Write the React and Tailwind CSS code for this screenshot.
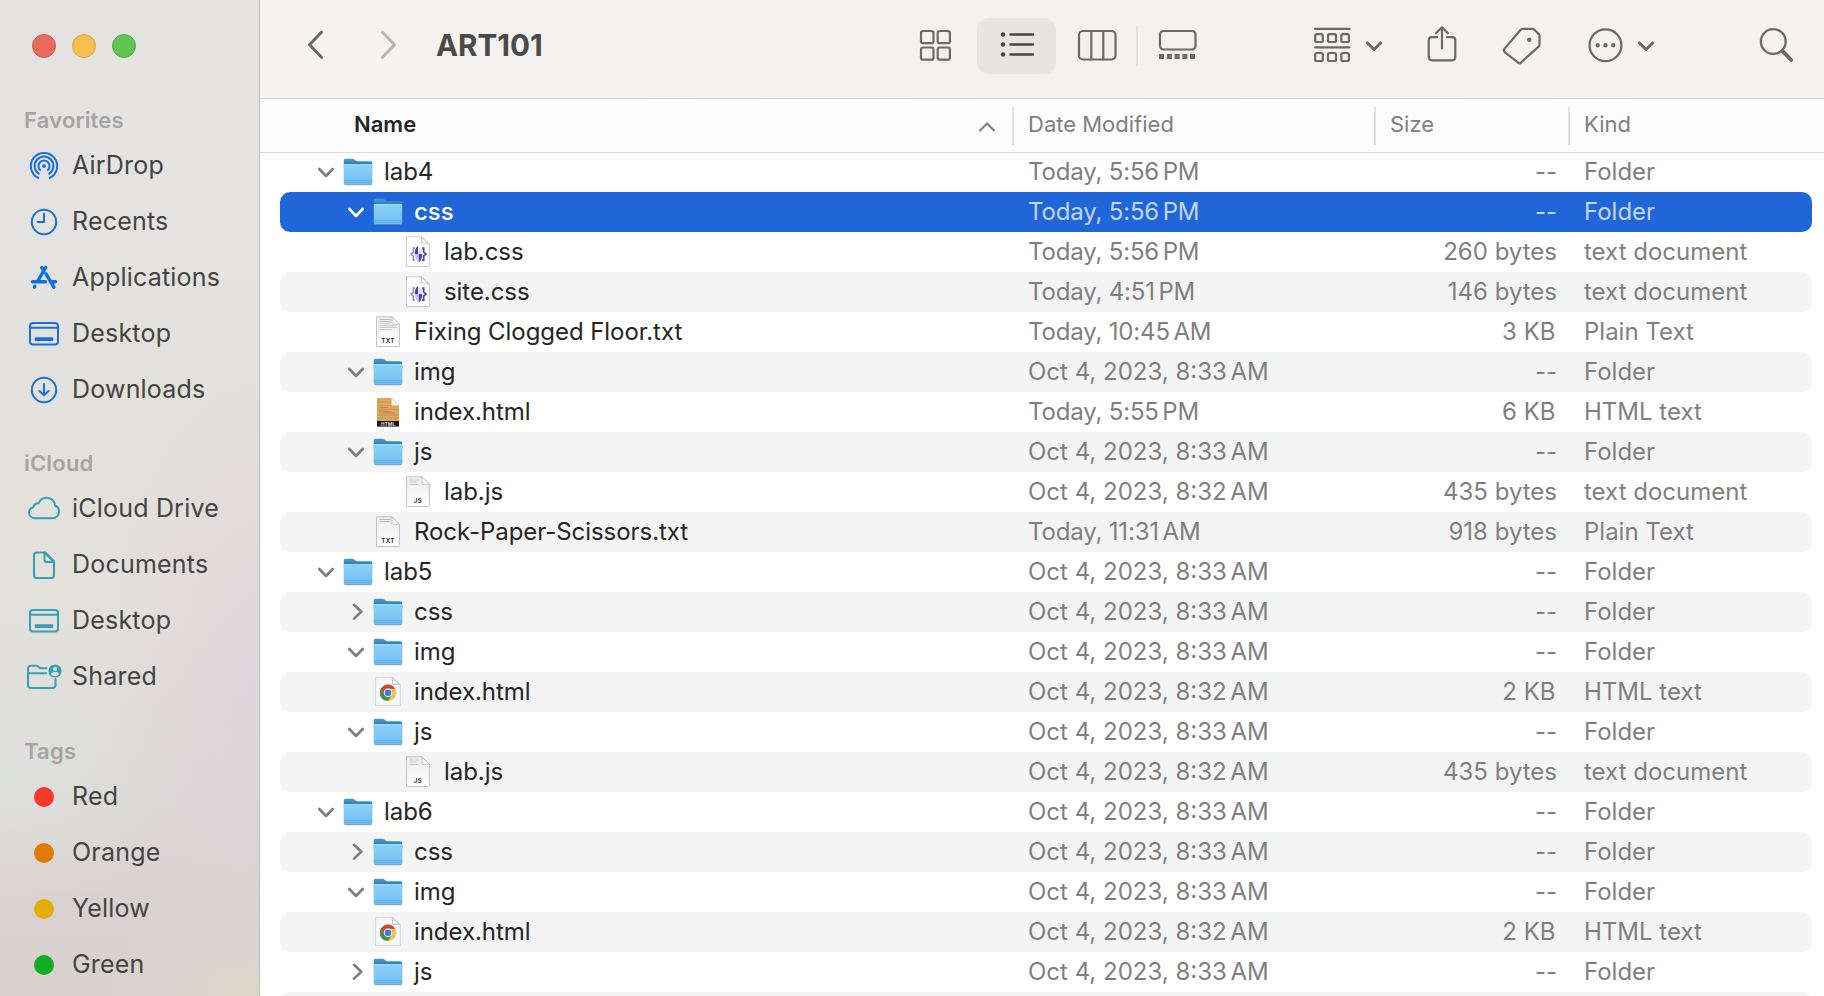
const DATE = "Oct 4, 2023, 8:33 AM";
const DATE2 = "Oct 4, 2023, 8:32 AM";

const rows = [
  { level: 0, open: true, icon: "folder", name: "lab4", date: "Today, 5:56 PM", size: "--", kind: "Folder" },
  { level: 1, open: true, icon: "folder", name: "css", date: "Today, 5:56 PM", size: "--", kind: "Folder", selected: true },
  { level: 2, icon: "css", name: "lab.css", date: "Today, 5:56 PM", size: "260 bytes", kind: "text document" },
  { level: 2, icon: "css", name: "site.css", date: "Today, 4:51 PM", size: "146 bytes", kind: "text document" },
  { level: 1, icon: "txt", name: "Fixing Clogged Floor.txt", date: "Today, 10:45 AM", size: "3 KB", kind: "Plain Text" },
  { level: 1, open: true, icon: "folder", name: "img", date: DATE, size: "--", kind: "Folder" },
  { level: 1, icon: "wood", name: "index.html", date: "Today, 5:55 PM", size: "6 KB", kind: "HTML text" },
  { level: 1, open: true, icon: "folder", name: "js", date: DATE, size: "--", kind: "Folder" },
  { level: 2, icon: "js", name: "lab.js", date: DATE2, size: "435 bytes", kind: "text document" },
  { level: 1, icon: "txt2", name: "Rock-Paper-Scissors.txt", date: "Today, 11:31 AM", size: "918 bytes", kind: "Plain Text" },
  { level: 0, open: true, icon: "folder", name: "lab5", date: DATE, size: "--", kind: "Folder" },
  { level: 1, open: false, icon: "folder", name: "css", date: DATE, size: "--", kind: "Folder" },
  { level: 1, open: true, icon: "folder", name: "img", date: DATE, size: "--", kind: "Folder" },
  { level: 1, icon: "chrome", name: "index.html", date: DATE2, size: "2 KB", kind: "HTML text" },
  { level: 1, open: true, icon: "folder", name: "js", date: DATE, size: "--", kind: "Folder" },
  { level: 2, icon: "js", name: "lab.js", date: DATE2, size: "435 bytes", kind: "text document" },
  { level: 0, open: true, icon: "folder", name: "lab6", date: DATE, size: "--", kind: "Folder" },
  { level: 1, open: false, icon: "folder", name: "css", date: DATE, size: "--", kind: "Folder" },
  { level: 1, open: true, icon: "folder", name: "img", date: DATE, size: "--", kind: "Folder" },
  { level: 1, icon: "chrome", name: "index.html", date: DATE2, size: "2 KB", kind: "HTML text" },
  { level: 1, open: false, icon: "folder", name: "js", date: DATE, size: "--", kind: "Folder" },
];

function Folder() {
  return (
    <svg width="30" height="30" viewBox="0 0 30 30">
      <defs>
        <linearGradient id="fb" x1="0" y1="0" x2="0" y2="1">
          <stop offset="0" stopColor="#4a9bd3" />
          <stop offset="0.5" stopColor="#2f7fbd" />
        </linearGradient>
        <linearGradient id="ff" x1="0" y1="0" x2="0" y2="1">
          <stop offset="0" stopColor="#8bd0f8" />
          <stop offset="1" stopColor="#74c1f1" />
        </linearGradient>
      </defs>
      <rect x="0.8" y="8" width="28.6" height="20.6" rx="2" fill="#000" opacity="0.14" />
      <path d="M.8 3.700C.8 2.300 1.400 1.700 2.800 1.700h6.400c1 0 1.500.2 2.300.9l1 .9c.6.6 1.200.7 2 .7h12.700c1.400 0 2 .7 2 2V12H.8z" fill="url(#fb)" />
      <path d="M.8 8.500c0-1 .6-1.500 1.600-1.500h25.200c1 0 1.600.5 1.600 1.500v17c0 1.300-.7 2-2 2H2.800c-1.300 0-2-.7-2-2z" fill="url(#ff)" />
      <path d="M1.200 7.600h27.600" stroke="#a5ddfb" strokeWidth="0.9" />
      <path d="M.8 23.600h28.400M.8 25.400h28.400" stroke="#58a8dc" strokeWidth="0.7" />
      <path d="M1.500 27.400h27" stroke="#4a96c9" strokeWidth="0.7" />
    </svg>
  );
}

function Page({ children, gray, flipped }) {
  return (
    <svg width="26" height="32" viewBox="0 0 26 32">
      <defs>
        <linearGradient id="pg" x1="0" y1="0" x2="0" y2="1">
          <stop offset="0" stopColor="#ececec" />
          <stop offset="1" stopColor="#ffffff" />
        </linearGradient>
      </defs>
      <path d="M1.500 1h15.500L24.500 8.500V31H1.500z" fill="#000" opacity="0.16" />
      <path
        d="M1.500.8h15.500L24.400 8.300V29.600c0 .6-.3.900-.9.900H2.400c-.6 0-.9-.3-.9-.9z"
        fill={gray ? "url(#pg)" : "#fff"}
        stroke={gray ? "#bdbdbd" : "#c6c6c6"}
        strokeWidth="0.9"
      />
      {children}
      <path
        d={flipped ? "M17 1v6.500c0 .6.200.8.800.8h6.600z" : "M16 1c.8 2 .6 4.200.2 6.200 2.800-.5 5.400-.2 8.100 1.100z"}
        fill="#fff"
        stroke="#b9b9b9"
        strokeWidth="0.8"
      />
    </svg>
  );
}

function Ext({ children }) {
  return (
    <text x="13" y="27.3" textAnchor="middle" fontSize="6.2" fontWeight="700" letterSpacing="0.3" fill="#3c3c3c" fontFamily="Inter, sans-serif">
      {children}
    </text>
  );
}

function FileIcon({ type }) {
  if (type === "folder") return <Folder />;
  if (type === "css")
    return (
      <Page>
        <path d="M10 12H8.300v4.200L6 18.100l2.300 1.900v4.200H10" fill="none" stroke="#8f8bd0" strokeWidth="1.5" />
        <path d="M17 12h1.700v4.200l2.300 1.900-2.300 1.900v4.200H17" fill="none" stroke="#4c48a5" strokeWidth="1.7" />
        <path d="M13 10v8H9.800c-.2-3.500.8-6.500 3.200-8z" fill="#4640a4" />
        <path d="M13.600 26.500V18.100h3.600c.1 3.800-1 6.900-3.600 8.400z" fill="#4a45a8" />
        <path d="M13.600 11.500v6.600h3.400c0-2.900-1-5.300-3.400-6.600z" fill="#dddbf5" />
        <path d="M13 25v-7H9.800c.2 3 1.100 5.500 3.200 7z" fill="#c3c0ea" />
      </Page>
    );
  if (type === "txt" || type === "txt2")
    return (
      <Page gray flipped>
        <path d="M4.500 3.500h11M4.500 5.500h11" stroke="#b4b4b4" strokeWidth="0.9" />
        {type === "txt" && <path d="M4.500 7.500h11M4.500 9.500h15M4.500 11.500h17M4.500 13.500h13" stroke="#c3c3c3" strokeWidth="0.9" />}
        <Ext>TXT</Ext>
      </Page>
    );
  if (type === "js")
    return (
      <Page gray flipped>
        <path d="M4.500 4h4M10 4h4M4.500 6h7M4.500 8.500h9" stroke="#c0c0c0" strokeWidth="0.9" />
        <Ext>JS</Ext>
      </Page>
    );
  if (type === "wood")
    return (
      <svg width="26" height="32" viewBox="0 0 26 32">
        <path d="M2 2h14.500L24 9.500V30.500H2z" fill="#dba75e" />
        <path d="M2 6h14M2 9.500h22M2 13.500h22M2 19h22M2 22h22" stroke="#c99650" strokeWidth="0.9" />
        <path d="M4 15.500h12M8 17h12M5 11.500h8" stroke="#b08243" strokeWidth="0.7" />
        <path d="M2 25h22v5.500H2z" fill="#17130f" />
        <text x="13" y="29.5" textAnchor="middle" fontSize="5" fontWeight="700" fill="#ddd" fontFamily="Inter, sans-serif">
          HTML
        </text>
        <path d="M16.500 2v6.500c0 .7.300 1 1 1H24z" fill="#fdf6ea" stroke="#d8c9ae" strokeWidth="0.5" />
      </svg>
    );
  return (
    <svg width="26" height="32" viewBox="0 0 26 32">
      <path d="M.7 1.500h17L25.300 9V29.500H.7z" fill="#f8f8f8" stroke="#d2d2d2" strokeWidth="0.9" />
      <path d="M17 1.700c.9 2.500.7 5 .3 7.200 2.700-.6 5.400-.6 8 .1z" fill="#fff" stroke="#b9b9b9" strokeWidth="0.8" />
      <circle cx="13" cy="16.800" r="8.200" fill="#f0c04a" />
      <path d="M5.900 12.700a8.200 8.200 0 0 1 14.200 0H13l-3.600 6.200z" fill="#cb4638" />
      <path d="M5.900 12.700l3.600 6.200 3.500 6.100A8.200 8.200 0 0 1 5.900 12.700z" fill="#3e9150" />
      <path d="M9.400 18.900l7.100 0L13 25z" fill="#3e9150" />
      <circle cx="13" cy="16.800" r="4.200" fill="#fff" />
      <circle cx="13" cy="16.800" r="3.300" fill="#3b78e0" />
    </svg>
  );
}

function Disclosure({ open, selected }) {
  const color = selected ? "#ffffff" : "#7d7d7d";
  return (
    <svg width="18" height="18" viewBox="0 0 18 18" fill="none" stroke={color} strokeWidth="2.6" strokeLinecap="round" strokeLinejoin="round">
      {open ? <path d="M2.300 6l6.700 7 6.700-7" /> : <path d="M7 1.800l7.300 6.900L7 15.600" />}
    </svg>
  );
}

function DateText({ value }) {
  const at = value.lastIndexOf(" ");
  const tracking = value.startsWith("Today") ? "tracking-[-0.17px]" : "";
  return (
    <span className={tracking}>
      {value.slice(0, at)}
      <span className="-ml-[3px]">{value.slice(at)}</span>
    </span>
  );
}

const indent = ["pl-[37px]", "pl-[67px]", "pl-[97px]"];

function Row({ row, index }) {
  const bg = row.selected ? "bg-[#2166d9]" : index % 2 ? "bg-[#f4f4f4]" : "";
  const dim = row.selected ? "text-[#c1d6f8]" : "text-[#7f7f7f]";
  return (
    <div className={`flex h-10 shrink-0 items-center rounded-[10px] whitespace-nowrap ${bg} ${dim}`}>
      <div className={`flex w-[748px] shrink-0 items-center ${indent[row.level]}`}>
        <span className="w-[18px]">{row.open !== undefined && <Disclosure open={row.open} selected={row.selected} />}</span>
        <span className="ml-2 flex w-[30px] justify-center">
          <FileIcon type={row.icon} />
        </span>
        <span className={`ml-[11px] tracking-[-0.06px] ${row.selected ? "font-medium text-white" : "text-[#252525]"}`}>{row.name}</span>
      </div>
      <div className="w-[347px]">
        <DateText value={row.date} />
      </div>
      <div className={`w-[182px] text-right ${row.size.endsWith("KB") ? "pr-[1.5px]" : ""}`}>{row.size}</div>
      <div className="ml-[27px]">{row.kind}</div>
    </div>
  );
}

function SideIcon({ name }) {
  const p = { width: 36, height: 36, viewBox: "0 0 36 36", fill: "none", strokeWidth: 2, strokeLinecap: "round", strokeLinejoin: "round" };
  const blue = "#1a6fdc";
  const teal = "#3a9fb2";
  if (name === "AirDrop")
    return (
      <svg {...p} stroke={blue}>
        <path d="M12.300 30a13.200 13.200 0 1 1 11.400 0" />
        <path d="M12.800 25.800a9.400 9.400 0 1 1 10.400 0" />
        <path d="M14.200 22.100a5.500 5.500 0 1 1 7.600 0" />
        <circle cx="18" cy="18" r="1.9" fill={blue} stroke="none" />
      </svg>
    );
  if (name === "Recents")
    return (
      <svg {...p} stroke={blue}>
        <circle cx="18" cy="18" r="12.2" />
        <path d="M18 9.700V18h-6.500" />
      </svg>
    );
  if (name === "Applications")
    return (
      <svg {...p} stroke="#0f70e6" strokeWidth="3.4">
        <path d="M19.700 7.500L11.500 21.500M15.800 7.500l1.400 2.300M6.500 21.700h13M26 21.700h3.500M20 13.800L28 27.300M9 26.200l-.6 1" />
      </svg>
    );
  if (name === "DesktopBlue" || name === "Desktop") {
    const c = name === "Desktop" ? teal : blue;
    return (
      <svg {...p} stroke={c}>
        <rect x="4" y="7" width="28" height="21.5" rx="3" />
        <path d="M4 11.800h28" />
        <rect x="8.700" y="21.200" width="18.6" height="3.8" rx="0.8" fill={c} stroke="none" />
      </svg>
    );
  }
  if (name === "Downloads")
    return (
      <svg {...p} stroke={blue}>
        <circle cx="18" cy="18" r="12.2" />
        <path d="M18 12v11M13.500 19l4.500 4.300 4.500-4.300" />
      </svg>
    );
  if (name === "iCloud Drive")
    return (
      <svg {...p} stroke={teal}>
        <path d="M9.300 27.300c-3.500 0-6.300-2.300-6.300-5.700 0-2.700 1.800-4.800 4.400-5.400.4-2.600 2.600-4.300 5.300-3.800C14 9 17 6.700 20.600 6.700c4.700 0 8.200 3.400 8.600 8 2.400.9 3.800 3 3.800 5.800 0 3.800-2.900 6.800-6.700 6.800z" />
      </svg>
    );
  if (name === "Documents")
    return (
      <svg {...p} stroke={teal}>
        <path d="M18.500 5.500H11C9 5.500 8 6.500 8 8.500V28c0 2 1 3 3 3h14c2 0 3-1 3-3V15z" />
        <path d="M18.500 5.500v7.300c0 1.600.7 2.300 2.300 2.300H28" />
        <path d="M18.500 5.500h.8L28 14.300v.7" />
      </svg>
    );
  return (
    <svg {...p} stroke={teal}>
      <path d="M20.500 9.200h-6.300L12 7.200c-.4-.4-.8-.5-1.400-.5H5c-2 0-3 .9-3 2.800v16.700c0 1.900 1 2.800 3 2.800h21.500c2 0 3-.9 3-2.800v-6.300M2 14.200h18" />
      <circle cx="29" cy="12" r="6.600" fill={teal} stroke="none" />
      <circle cx="29" cy="10" r="2.1" fill="#e2e0db" stroke="none" />
      <path d="M25 15.300c.6-1.700 2.200-2.500 4-2.500s3.400.8 4 2.500a5 5 0 0 1-8 0z" fill="#e2e0db" stroke="none" />
    </svg>
  );
}

const sections = [
  { title: "Favorites", items: [["AirDrop"], ["Recents"], ["Applications"], ["Desktop", "DesktopBlue"], ["Downloads"]] },
  { title: "iCloud", items: [["iCloud Drive"], ["Documents"], ["Desktop"], ["Shared"]] },
];
const tags = [
  ["Red", "bg-[#f8372b]"],
  ["Orange", "bg-[#e27b03]"],
  ["Yellow", "bg-[#e1af04]"],
  ["Green", "bg-[#0fac24]"],
];

function Heading({ children, short }) {
  return (
    <h2 className={`flex items-end pb-[6px] pl-6 text-[22px] leading-6 font-semibold text-[#a5a4a0] ${short ? "h-[63px]" : "h-16"}`}>
      {children}
    </h2>
  );
}

function Sidebar() {
  return (
    <aside className="flex w-[260px] shrink-0 flex-col border-r border-[#bdbbba] bg-[radial-gradient(ellipse_150px_300px_at_100%_68%,#dfd2dacc,#dfd2da66_50%,#dfd2da00),radial-gradient(ellipse_160px_90px_at_100%_100%,#ded9c9cc,#ded9c900),radial-gradient(ellipse_200px_150px_at_0%_77%,#dfe2decc,#dfe2de00),linear-gradient(180deg,#e4e3e2_0%,#e4e3e1_24%,#e3e1dc_38%,#e3e1dc_62%,#dbd8d7_80%,#dad2d1_90%,#d9d1cf_100%)] text-[25px] tracking-[0.2px] text-[#454343]">
      <div className="flex h-[74px] shrink-0 gap-4 pt-[34px] pl-8">
        <span className="size-6 rounded-full border border-[#d5594f] bg-[#ec6a5e]" />
        <span className="size-6 rounded-full border border-[#dba744] bg-[#f5bf4f]" />
        <span className="size-6 rounded-full border border-[#50ad45] bg-[#61c554]" />
      </div>
      {sections.map((s, i) => (
        <section key={s.title}>
          <Heading short={i === 1}>{s.title}</Heading>
          {s.items.map(([label, icon]) => (
            <div key={label} className="flex h-14 items-center pl-[26px]">
              <SideIcon name={icon || label} />
              <span className="ml-[10px] whitespace-nowrap">{label}</span>
            </div>
          ))}
        </section>
      ))}
      <section>
        <Heading>Tags</Heading>
        {tags.map(([label, color]) => (
          <div key={label} className="flex h-14 items-center pl-[34px]">
            <span className={`size-5 rounded-full ${color}`} />
            <span className="ml-[18px]">{label}</span>
          </div>
        ))}
      </section>
    </aside>
  );
}

const ico = { height: 40, fill: "none", stroke: "#6b6a68", strokeWidth: 2.2, strokeLinecap: "round", strokeLinejoin: "round" };

function Chevron({ className }) {
  return (
    <svg {...ico} width="18" viewBox="0 0 18 40" strokeWidth="2.9" className={className}>
      <path d="M2.300 16.900l6.700 6.600 6.700-6.600" />
    </svg>
  );
}

function Toolbar() {
  return (
    <header className="flex h-[99px] shrink-0 items-start overflow-hidden border-b border-[#d3d1d1] bg-linear-to-r from-[#f5f4f3] via-[#f2f1f0] to-[#f4f3f2] pt-[26px]">
      <svg {...ico} width="20" viewBox="0 0 20 40" strokeWidth="3" className="ml-[46px] shrink-0">
        <path d="M15.500 6.300L3.500 18.800l12 12.500" />
      </svg>
      <svg {...ico} width="20" viewBox="0 0 20 40" strokeWidth="3" stroke="#b7b6b5" className="ml-[53px] shrink-0">
        <path d="M3.500 6.300l12 12.500-12 12.500" />
      </svg>
      <h1 className="-mt-px w-[481px] pl-[37px] text-[29.6px] leading-10 font-bold text-[#4b4a49]">ART101</h1>
      <svg {...ico} width="32" viewBox="0 0 32 40" className="ml-[39px] shrink-0">
        <rect x="2" y="5" width="12.5" height="12.2" rx="2" />
        <rect x="18.700" y="5" width="12.2" height="12.2" rx="2" />
        <rect x="2" y="21.5" width="12.5" height="12.2" rx="2" />
        <rect x="18.700" y="21.5" width="12.2" height="12.2" rx="2" />
      </svg>
      <div className="-mt-2 ml-[26px] flex h-14 w-[79px] shrink-0 items-center justify-center rounded-xl bg-[#e6e5e4]">
        <svg {...ico} width="36" viewBox="0 0 36 40" stroke="#474645" className="-mt-1">
          <path d="M11.500 10.500h22.500M11.500 20.500h22.500M11.500 30.500h22.500" strokeWidth="2.4" />
          <circle cx="4" cy="10.500" r="2.2" fill="#474645" stroke="none" />
          <circle cx="4" cy="20.500" r="2.2" fill="#474645" stroke="none" />
          <circle cx="4" cy="30.500" r="2.2" fill="#474645" stroke="none" />
        </svg>
      </div>
      <svg {...ico} width="40" viewBox="0 0 40 40" className="ml-[21px] shrink-0">
        <rect x="2" y="5" width="36.5" height="28.5" rx="4" />
        <path d="M14.300 5v28.500M26.300 5v28.500" />
      </svg>
      <span className="ml-[19px] h-10 w-[2px] shrink-0 bg-[#e2e1e0]" />
      <svg {...ico} width="40" viewBox="0 0 40 40" className="ml-5 shrink-0">
        <rect x="2" y="5" width="35.5" height="18.5" rx="3.5" />
        <path d="M1 28h5v5H1zM8.800 28h5v5h-5zM16.600 28h5v5h-5zM24.400 28h5v5h-5zM32 28h5v5h-5z" fill="#6b6a68" stroke="none" />
      </svg>
      <svg {...ico} width="40" viewBox="0 0 40 40" className="ml-[115px] shrink-0">
        <path d="M2 2.800h34.500M2 21.300h34.500" />
        <rect x="2.200" y="8.200" width="7.6" height="7.8" rx="1.5" />
        <rect x="15" y="8.200" width="8" height="7.8" rx="1.5" />
        <rect x="28.300" y="8.200" width="7.6" height="7.8" rx="1.5" />
        <rect x="2.200" y="27" width="7.6" height="8" rx="1.5" />
        <rect x="15" y="27" width="8" height="8" rx="1.5" />
        <rect x="28.300" y="27" width="7.6" height="8" rx="1.5" />
      </svg>
      <Chevron className="ml-3 shrink-0" />
      <svg {...ico} width="32" viewBox="0 0 32 40" className="ml-[43px] shrink-0">
        <path d="M11 11.200H6c-2 0-3.300 1.100-3.300 3.300V31c0 2.200 1.300 3.300 3.300 3.300h20c2 0 3.300-1.100 3.300-3.300V14.500c0-2.200-1.300-3.300-3.300-3.300h-5" />
        <path d="M16 22.500V1.500M10 7.200L16 1.200l6 6" />
      </svg>
      <svg {...ico} width="40" viewBox="0 0 40 40" className="ml-[44px] shrink-0">
        <path d="M20.800 2.900h9.500c.9 0 1.500.2 2.100.8l4.200 4.200c.6.6.9 1.200.9 2.100v8.500c0 .9-.3 1.500-.9 2.100L19.200 36.400c-1.100 1.200-2.300 1.200-3.400 0L2.600 26.100c-1.100-1.200-1.100-2.300 0-3.500L18.700 3.700c.6-.6 1.200-.8 2.100-.8z" />
        <circle cx="27.300" cy="13.700" r="2.2" fill="#6b6a68" stroke="none" />
      </svg>
      <svg {...ico} width="38" viewBox="0 0 38 40" className="ml-[45px] shrink-0">
        <circle cx="18.500" cy="19.200" r="15.9" />
        <path d="M10.700 19.200h.01M18.500 19.200h.01M26.300 19.200h.01" strokeWidth="4.4" />
      </svg>
      <Chevron className="ml-[12px] shrink-0" />
      <svg {...ico} width="38" viewBox="0 0 38 40" className="ml-[104px] shrink-0">
        <circle cx="14.300" cy="15.500" r="12.4" strokeWidth="2.4" />
        <path d="M23.800 25.300l8.500 8.700" strokeWidth="3.8" />
      </svg>
    </header>
  );
}

export default function App() {
  return (
    <div className="flex h-[996px] w-[1824px] overflow-hidden bg-white font-['Inter',sans-serif]">
      <Sidebar />
      <main className="flex min-w-0 flex-1 flex-col">
        <Toolbar />
        <div className="z-10 flex h-[54px] shrink-0 items-center border-b border-[#dadada] bg-[#fcfcfd] text-[22px] text-[#7f7f7f]">
          <div className="flex w-[752px] items-center justify-between pr-[16px] pb-[2px] pl-[94px]">
            <span className="font-semibold text-[#252525]">Name</span>
            <svg width="18" height="12" viewBox="0 0 18 12" fill="none" stroke="#7c7c7c" strokeWidth="2" strokeLinecap="round" strokeLinejoin="round" className="mt-1">
              <path d="M2 9.500l7-7 7 7" />
            </svg>
          </div>
          <div className="flex h-[38px] w-[362px] items-center border-l-2 border-[#e0e0e0] pb-[2px] pl-[14px]">Date Modified</div>
          <div className="flex h-[38px] w-[194px] items-center border-l-2 border-[#e0e0e0] pb-[2px] pl-[14px]">Size</div>
          <div className="flex h-[38px] items-center border-l-2 border-[#e0e0e0] pb-[2px] pl-[14px]">Kind</div>
        </div>
        <div className="-mt-px flex flex-1 flex-col overflow-hidden pr-[12px] pl-5 text-[24px]">
          {rows.map((row, i) => (
            <Row key={i} row={row} index={i} />
          ))}
          <div className="h-10 shrink-0 rounded-[10px] bg-[#f4f4f4]" />
        </div>
      </main>
    </div>
  );
}
